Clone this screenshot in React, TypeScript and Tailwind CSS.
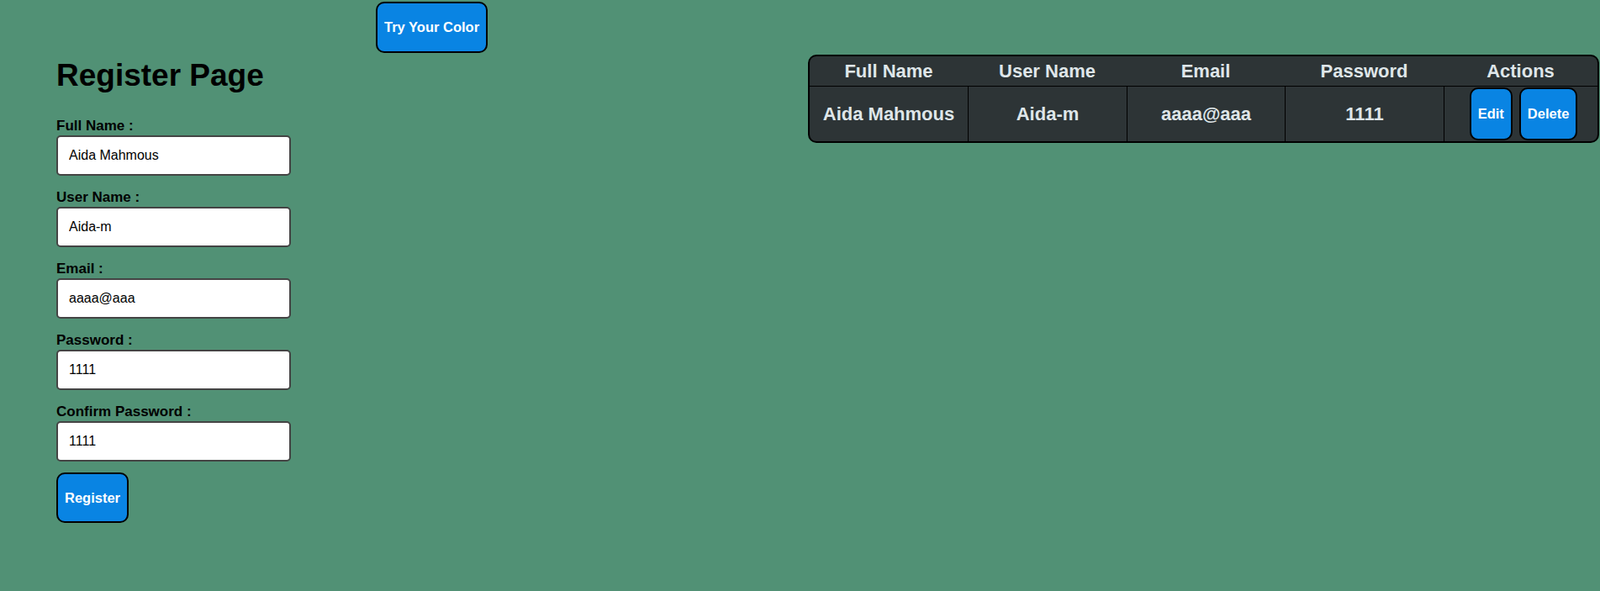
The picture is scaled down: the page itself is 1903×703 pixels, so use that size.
import { useState } from "react";

type User = {
  fullName: string;
  userName: string;
  email: string;
  password: string;
};

const fields = [
  { key: "fullName", label: "Full Name :", type: "text" },
  { key: "userName", label: "User Name :", type: "text" },
  { key: "email", label: "Email :", type: "email" },
  { key: "password", label: "Password :", type: "text" },
  { key: "confirm", label: "Confirm Password :", type: "text" },
] as const;

const btn =
  "bg-[#0984e3] text-white font-bold text-[16.5px] leading-[17px] px-2 border-2 border-black rounded-[10px] font-['Liberation_Sans',Arial,sans-serif]";

export default function App() {
  const [form, setForm] = useState<Record<string, string>>({
    fullName: "Aida Mahmous",
    userName: "Aida-m",
    email: "aaaa@aaa",
    password: "1111",
    confirm: "1111",
  });
  const [users] = useState<User[]>([
    {
      fullName: "Aida Mahmous",
      userName: "Aida-m",
      email: "aaaa@aaa",
      password: "1111",
    },
  ]);

  return (
    <div className="min-h-[703px] bg-[#519175] font-['Liberation_Sans',Arial,sans-serif] text-black">
      <div className="pl-[447px] pt-[2px]">
        <button className={`${btn} h-[61px]`}>Try Your Color</button>
      </div>

      <div className="flex items-start justify-between">
        <form
          className="pl-[67px] pt-[7px] w-[360px]"
          onSubmit={(e) => e.preventDefault()}
        >
          <h1 className="text-[37px] leading-[40px] font-bold mb-[30px]">
            Register Page
          </h1>
          {fields.map((f) => (
            <div key={f.key} className="mb-4">
              <label className="block text-[17px] leading-[20px] font-bold mb-px">
                {f.label}
              </label>
              <input
                type={f.type}
                value={form[f.key]}
                onChange={(e) => setForm({ ...form, [f.key]: e.target.value })}
                className="block w-[279px] h-[48px] bg-white border-2 border-[#444] rounded-[5px] px-[13px] text-[16px] text-black outline-none"
              />
            </div>
          ))}
          <button className={`${btn} h-[60px] -mt-[3px]`}>Register</button>
        </form>

        <div className="mt-[2px] mr-px w-[941px] bg-[#2d3436] border-2 border-black rounded-[10px] overflow-hidden">
          <table className="w-full table-fixed border-separate border-spacing-0 text-[#dfe6e9] text-[22px] font-bold">
            <thead>
              <tr className="h-[35px]">
                <th className="w-[188px] font-bold">Full Name</th>
                <th className="w-[189px] font-bold">User Name</th>
                <th className="w-[188px] font-bold">Email</th>
                <th className="w-[189px] font-bold">Password</th>
                <th className="font-bold">Actions</th>
              </tr>
            </thead>
            <tbody>
              {users.map((u, i) => (
                <tr key={i} className="h-[66px]">
                  <td className="text-center border-t border-black">{u.fullName}</td>
                  <td className="text-center border-t border-l border-black">{u.userName}</td>
                  <td className="text-center border-t border-l border-black">{u.email}</td>
                  <td className="text-center border-t border-l border-black">{u.password}</td>
                  <td className="border-t border-l border-black">
                    <div className="flex justify-center gap-2 pl-[6px] pb-px">
                      <button className={`${btn} h-[63px]`}>Edit</button>
                      <button className={`${btn} h-[63px]`}>Delete</button>
                    </div>
                  </td>
                </tr>
              ))}
            </tbody>
          </table>
        </div>
      </div>
    </div>
  );
}
